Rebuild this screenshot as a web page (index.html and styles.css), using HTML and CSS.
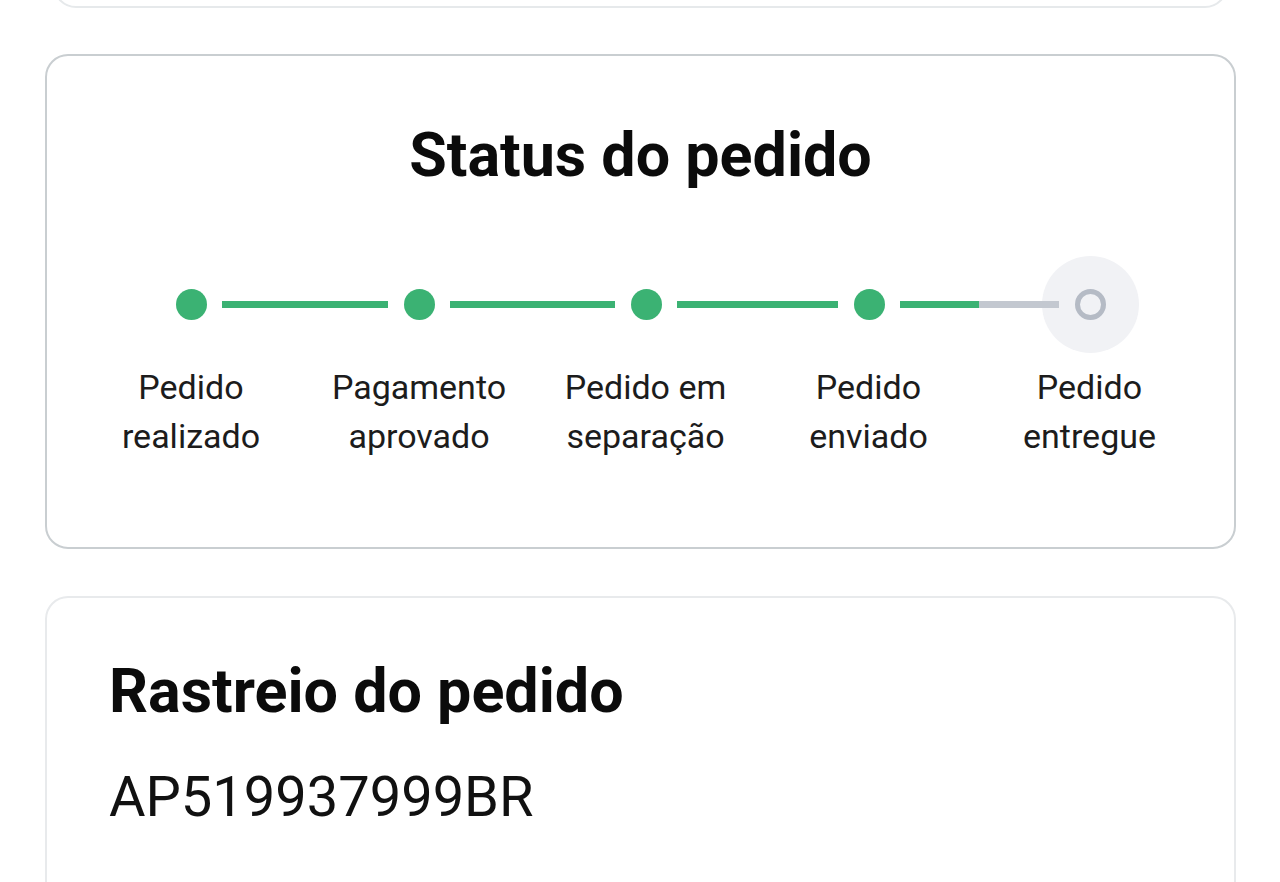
FILE: index.html
```html
<!DOCTYPE html>
<html lang="pt-BR">
<head>
    <meta charset="UTF-8">
    <meta name="viewport" content="width=device-width, initial-scale=1.0">
    <title>Pedido</title>
    <link rel="stylesheet" href="styles.css">
</head>
<body>
    <div class="page">
        <div class="card card-top"></div>

        <section class="card status-card">
            <h1 class="status-title">Status do pedido</h1>

            <div class="steps">
                <div class="step done">
                    <div class="track">
                        <span class="bar bar-left hidden"></span>
                        <span class="dot"></span>
                        <span class="bar bar-right"></span>
                    </div>
                    <p class="step-label">Pedido<br>realizado</p>
                </div>
                <div class="step done">
                    <div class="track">
                        <span class="bar bar-left"></span>
                        <span class="dot"></span>
                        <span class="bar bar-right"></span>
                    </div>
                    <p class="step-label">Pagamento<br>aprovado</p>
                </div>
                <div class="step done">
                    <div class="track">
                        <span class="bar bar-left"></span>
                        <span class="dot"></span>
                        <span class="bar bar-right"></span>
                    </div>
                    <p class="step-label">Pedido em<br>separação</p>
                </div>
                <div class="step done">
                    <div class="track">
                        <span class="bar bar-left"></span>
                        <span class="dot"></span>
                        <span class="bar bar-right"></span>
                    </div>
                    <p class="step-label">Pedido<br>enviado</p>
                </div>
                <div class="step current">
                    <div class="track">
                        <span class="bar bar-left pending"></span>
                        <span class="halo"><span class="ring"></span></span>
                        <span class="bar bar-right hidden"></span>
                    </div>
                    <p class="step-label">Pedido<br>entregue</p>
                </div>
            </div>
        </section>

        <section class="card tracking-card">
            <h2 class="tracking-title">Rastreio do pedido</h2>
            <p class="tracking-code">AP519937999BR</p>
        </section>
    </div>
</body>
</html>
```

FILE: styles.css
```css
* {
    box-sizing: border-box;
    margin: 0;
    padding: 0;
}

body {
    font-family: Roboto, "Noto Sans", Arial, sans-serif;
    background-color: #ffffff;
    color: #111;
    overflow: hidden;
    height: 882px;
}

.page {
    padding: 0 44px 0 45px;
}

.card {
    background-color: #ffffff;
    border-radius: 23px;
}

.card-top {
    height: 60px;
    margin: -52px 8px 0 8px;
    border: 2px solid #e6e9eb;
}

.status-card {
    margin-top: 46px;
    height: 495px;
    border: 2px solid #c9ced1;
    padding: 63px 30px 0 30px;
}

.status-title {
    text-align: center;
    font-size: 61px;
    line-height: 72px;
    font-weight: 700;
    color: #0b0b0b;
}

.steps {
    display: grid;
    grid-template-columns: 228px 228px 225px 221px 221px;
    margin-top: 98px;
}

.step {
    display: flex;
    flex-direction: column;
    align-items: center;
}

.track {
    display: flex;
    align-items: center;
    width: 100%;
    height: 31px;
}

.bar {
    flex: 1;
    height: 7px;
    background-color: #3bb273;
    position: relative;
    z-index: 1;
}

.bar-left {
    margin-right: 16px;
}

.bar-right {
    margin-left: 15px;
}

.bar.hidden {
    visibility: hidden;
}

.bar.pending {
    background-color: #c3c8d0;
}

.dot {
    width: 31px;
    height: 31px;
    border-radius: 50%;
    background-color: #3bb273;
    flex-shrink: 0;
}

.halo {
    display: flex;
    align-items: center;
    justify-content: center;
    flex-shrink: 0;
    width: 97px;
    height: 97px;
    margin: -33px;
    border-radius: 50%;
    background-color: #f1f2f5;
}

.ring {
    width: 31px;
    height: 31px;
    border-radius: 50%;
    border: 5px solid #b5bbc5;
}

.step-label {
    margin-top: 43px;
    font-size: 34px;
    line-height: 49px;
    text-align: center;
    color: #1c1c1c;
}

.tracking-card {
    margin-top: 47px;
    height: 320px;
    border: 2px solid #e8eaec;
    padding: 57px 62px 0 62px;
}

.tracking-title {
    font-size: 61px;
    line-height: 72px;
    font-weight: 700;
    color: #0b0b0b;
}

.tracking-code {
    margin-top: 37px;
    font-size: 56px;
    line-height: 66px;
    color: #111;
}
```
